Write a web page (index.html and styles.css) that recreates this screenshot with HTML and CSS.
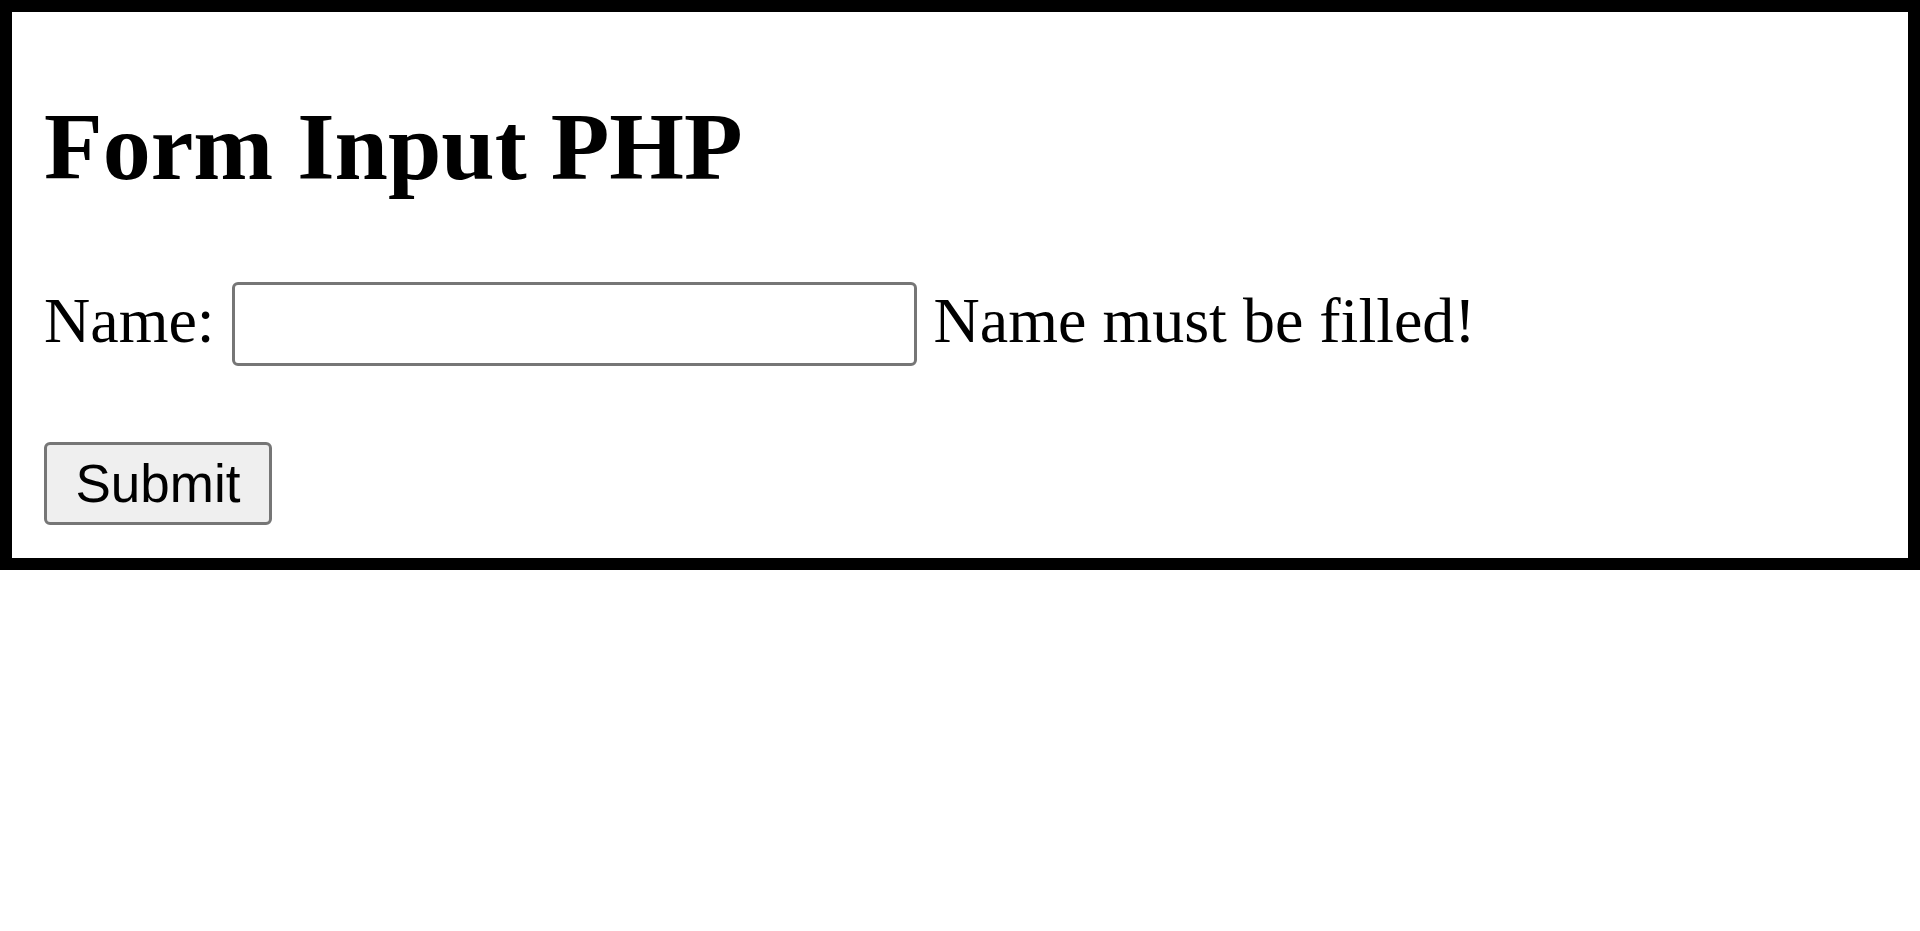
FILE: index.html
```html
<!DOCTYPE html>
<html>
<head>
<meta charset="utf-8">
<title>Form Input PHP</title>
<link rel="stylesheet" href="styles.css">
</head>
<body>
<div class="frame">
  <h1 class="title">Form Input PHP</h1>
  <form class="form">
    <div class="row">
      <span class="label">Name:</span>
      <input class="field" type="text" name="name">
      <span class="label">Name must be filled!</span>
    </div>
    <button class="submit" type="button">Submit</button>
  </form>
</div>
</body>
</html>
```

FILE: styles.css
```css
html, body {
  margin: 0;
  padding: 0;
  background: #ffffff;
}

body {
  font-family: "Liberation Serif", "Times New Roman", serif;
  color: #000000;
}

.frame {
  box-sizing: border-box;
  width: 100%;
  border: 12px solid #000000;
  padding: 82px 32px 33px 32px;
}

.title {
  margin: 0;
  font-size: 96px;
  font-weight: bold;
  line-height: 106px;
}

.form {
  margin: 82px 0 0 0;
  display: flex;
  flex-direction: column;
  align-items: flex-start;
}

.row {
  display: flex;
  align-items: flex-start;
  gap: 17px;
}

.label {
  font-size: 64px;
  line-height: 72px;
  margin-top: 3px;
  white-space: nowrap;
}

.field {
  box-sizing: border-box;
  width: 685px;
  height: 84px;
  margin: 0;
  border: 3px solid #767676;
  border-radius: 6px;
  background: #ffffff;
  padding: 0 8px;
  font-family: "Liberation Sans", Arial, sans-serif;
  font-size: 53px;
}

.submit {
  box-sizing: border-box;
  margin-top: 76px;
  width: 228px;
  height: 83px;
  padding: 0;
  border: 3px solid #767676;
  border-radius: 6px;
  background: #efefef;
  color: #000000;
  font-family: "Liberation Sans", Arial, sans-serif;
  font-size: 53px;
  line-height: 1;
}
```
